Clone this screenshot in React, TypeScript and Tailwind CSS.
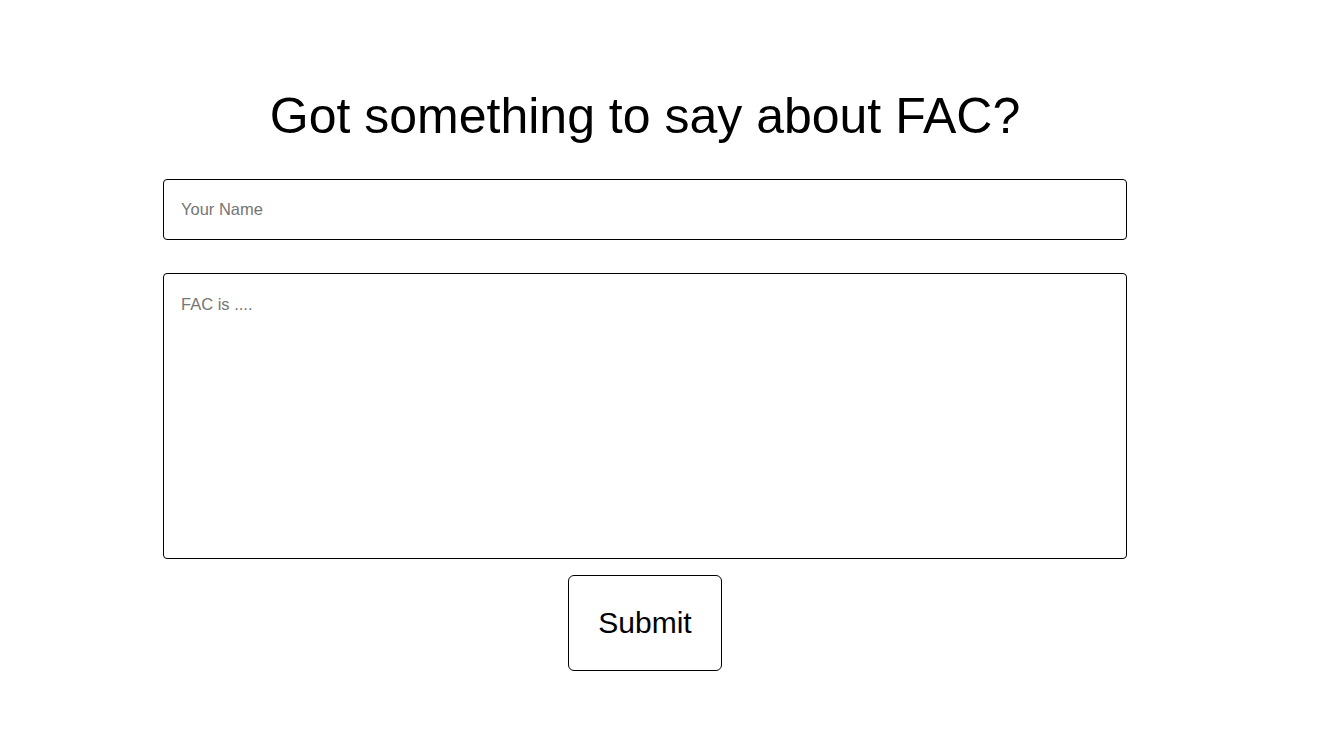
export default function App() {
  return (
    <div className="min-h-screen bg-white font-['Liberation_Sans',Arial,sans-serif] text-black">
      <div className="w-[1290px] flex flex-col items-center pt-[88px]">
        <h1 className="text-[50px] leading-[57px] font-normal">Got something to say about FAC?</h1>
        <form className="flex flex-col items-center mt-[34px]" onSubmit={(e) => e.preventDefault()}>
          <input
            type="text"
            placeholder="Your Name"
            className="w-[964px] h-[61px] border border-black rounded-[4px] px-[17px] text-[16.5px] placeholder:text-[#757575] outline-none"
          />
          <textarea
            placeholder="FAC is ...."
            className="w-[964px] h-[286px] mt-[33px] border border-black rounded-[4px] px-[17px] pt-[18px] text-[16.5px] placeholder:text-[#757575] outline-none resize-none"
          />
          <button
            type="submit"
            className="w-[154px] h-[96px] mt-[16px] border border-black rounded-[6px] bg-white text-[30px] pb-[2px]"
          >
            Submit
          </button>
        </form>
      </div>
    </div>
  );
}
